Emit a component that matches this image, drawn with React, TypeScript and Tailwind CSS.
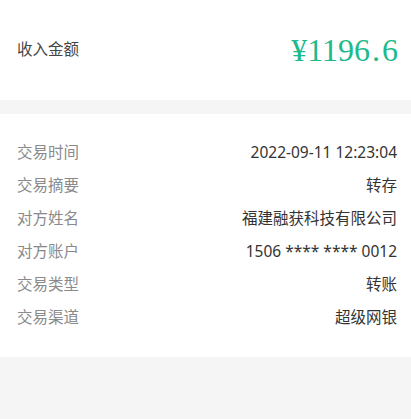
const DETAILS = [
  { label: "交易时间", value: "2022-09-11 12:23:04" },
  { label: "交易摘要", value: "转存" },
  { label: "对方姓名", value: "福建融获科技有限公司" },
  { label: "对方账户", value: "1506 **** **** 0012" },
  { label: "交易类型", value: "转账" },
  { label: "交易渠道", value: "超级网银" },
]

export default function App() {
  return (
    <div
      className="min-h-[419px] w-full bg-[#f5f5f5]"
      style={{ fontFamily: '"Noto Sans", "Noto Sans CJK SC", sans-serif' }}
    >
      {/* Amount */}
      <div className="flex h-[100px] items-center justify-between bg-white pl-[17px] pr-[13px]">
        <span className="text-[15.5px] text-[#444]">收入金额</span>
        <span
          className="text-[32px] leading-none text-[#1dba8b]"
          style={{ fontFamily: '"Liberation Serif", serif' }}
        >
          ¥1196<span className="mx-[2px]">.</span>6
        </span>
      </div>

      {/* Details */}
      <div className="mt-[14px] flex flex-col bg-white pl-[17px] pr-[14px] pt-[22px] pb-[23px]">
        {DETAILS.map(({ label, value }) => (
          <div key={label} className="flex h-[33px] items-center justify-between text-[15.5px]">
            <span className="text-[#8a8a8a]">{label}</span>
            <span className="text-[#333]">{value}</span>
          </div>
        ))}
      </div>
    </div>
  )
}
